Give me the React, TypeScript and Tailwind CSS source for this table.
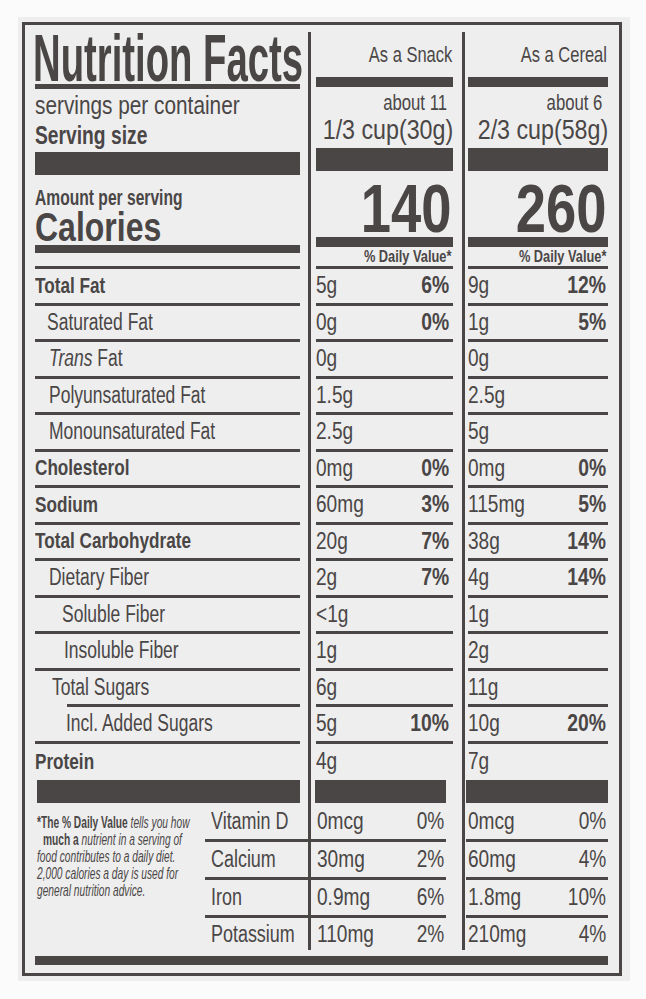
import React from "react";

type Row = {
  label: React.ReactNode;
  bold?: boolean;
  indent?: number;
  a: string;
  ap?: string;
  b: string;
  bp?: string;
  lineInset?: boolean;
  noLine?: boolean;
};

const rows: Row[] = [
  { label: "Total Fat", bold: true, a: "5g", ap: "6%", b: "9g", bp: "12%" },
  { label: "Saturated Fat", indent: 1, a: "0g", ap: "0%", b: "1g", bp: "5%" },
  { label: (<><i>Trans</i>{" "}Fat</>), indent: 2, a: "0g", b: "0g" },
  { label: "Polyunsaturated Fat", indent: 2, a: "1.5g", b: "2.5g" },
  { label: "Monounsaturated Fat", indent: 2, a: "2.5g", b: "5g" },
  { label: "Cholesterol", bold: true, a: "0mg", ap: "0%", b: "0mg", bp: "0%" },
  { label: "Sodium", bold: true, a: "60mg", ap: "3%", b: "115mg", bp: "5%" },
  { label: "Total Carbohydrate", bold: true, a: "20g", ap: "7%", b: "38g", bp: "14%" },
  { label: "Dietary Fiber", indent: 2, a: "2g", ap: "7%", b: "4g", bp: "14%" },
  { label: "Soluble Fiber", indent: 3, a: "<1g", b: "1g" },
  { label: "Insoluble Fiber", indent: 4, a: "1g", b: "2g" },
  { label: "Total Sugars", indent: 5, a: "6g", b: "11g", lineInset: true },
  { label: "Incl. Added Sugars", indent: 6, a: "5g", ap: "10%", b: "10g", bp: "20%" },
  { label: "Protein", bold: true, a: "4g", b: "7g", noLine: true },
];

function indentClass(i?: number) {
  switch (i) {
    case 1:
      return "pl-[12px]";
    case 2:
      return "pl-[14px]";
    case 3:
      return "pl-[27px]";
    case 4:
      return "pl-[29px]";
    case 5:
      return "pl-[17px]";
    case 6:
      return "pl-[31px]";
    default:
      return "pl-0";
  }
}

const vit = [
  { label: "Vitamin D", a: "0mcg", ap: "0%", b: "0mcg", bp: "0%", h: "h-[39px]" },
  { label: "Calcium", a: "30mg", ap: "2%", b: "60mg", bp: "4%", h: "h-[38px]" },
  { label: "Iron", a: "0.9mg", ap: "6%", b: "1.8mg", bp: "10%", h: "h-[38px]" },
  { label: "Potassium", a: "110mg", ap: "2%", b: "210mg", bp: "4%", h: "h-[32px]", last: true },
];

function S({ children, c }: { children: React.ReactNode; c: string }) {
  return <span className={`inline-block whitespace-nowrap ${c}`}>{children}</span>;
}

const LINE = "border-b-[3px] border-[#4a4646]";

export default function App() {
  return (
    <div className="w-[646px] h-[999px] bg-[#fbfbfb] pt-[17px] pl-[18px] text-[#4a4646] font-['Liberation_Sans',Arial,sans-serif]">
      <div className="w-[612px] h-[964px] bg-[#eeeeee] pt-[5px] pl-[4px]">
        <div className="w-[600px] h-[954px] border-[3px] border-[#4a4646] flex flex-col pt-[7px]">
          {/* Header */}
          <div className="flex h-[237px]">
            <div className="w-[283px] pl-[10px] pr-[8px] flex flex-col">
              <div className="h-[52px] text-[66px] leading-[52px] font-bold whitespace-nowrap -ml-[2px]">
                <S c="origin-left scale-x-[0.58]">Nutrition Facts</S>
              </div>
              <div className="h-[5px] bg-[#4a4646]" />
              <div className="h-[63px] flex flex-col">
                <div className="h-[32px] text-[26px] leading-[32px]">
                  <S c="origin-left scale-x-[0.8]">servings per container</S>
                </div>
                <div className="h-[31px] text-[25px] leading-[29px] font-bold">
                  <S c="origin-left scale-x-[0.77]">Serving size</S>
                </div>
              </div>
              <div className="h-[23px] bg-[#4a4646]" />
              <div className="h-[70px] pt-[11px] flex flex-col">
                <div className="h-[23px] text-[22px] leading-[23px] font-bold">
                  <S c="origin-left scale-x-[0.71]">Amount per serving</S>
                </div>
                <div className="h-[36px] text-[41px] leading-[36px] font-bold">
                  <S c="origin-left scale-x-[0.78]">Calories</S>
                </div>
              </div>
              <div className="h-[8px] bg-[#4a4646]" />
              <div className="h-[13px]" />
              <div className="h-[3px] bg-[#4a4646]" />
            </div>

            {[
              { head: "As a Snack", serv: "about 11", size: "1/3 cup(30g)", cal: "140", cls: "w-[154px] pl-[5px] pr-[9px]" },
              { head: "As a Cereal", serv: "about 6", size: "2/3 cup(58g)", cal: "260", cls: "w-[157px] pl-[3px] pr-[11px]" },
            ].map((c) => (
              <div key={c.head} className={`${c.cls} border-l-[3px] border-[#4a4646] flex flex-col`}>
                <div className="h-[45px] flex items-center justify-end text-[22px] leading-none pr-[1px]">
                  <S c="origin-right scale-x-[0.75]">{c.head}</S>
                </div>
                <div className="h-[10px] bg-[#4a4646]" />
                <div className="h-[61px] flex flex-col items-end pt-[4px]">
                  <div className="text-[22px] leading-[24px] pr-[6px]">
                    <S c="origin-right scale-x-[0.76]">{c.serv}</S>
                  </div>
                  <div className="text-[28px] leading-[30px]">
                    <S c="origin-right scale-x-[0.83]">{c.size}</S>
                  </div>
                </div>
                <div className="h-[23px] bg-[#4a4646]" />
                <div className="h-[66px] flex justify-end pt-[4px] text-[68px] leading-[66px] font-bold pr-[2px]">
                  <S c="origin-right scale-x-[0.8]">{c.cal}</S>
                </div>
                <div className="h-[10px] bg-[#4a4646]" />
                <div className="h-[19px] flex items-center justify-end text-[16px] leading-none font-bold pr-[2px]">
                  <S c="origin-right scale-x-[0.8]">% Daily Value*</S>
                </div>
                <div className="h-[3px] bg-[#4a4646]" />
              </div>
            ))}
          </div>

          {/* Nutrient rows */}
          <div className="flex flex-col h-[511px]">
            {rows.map((r, i) => (
              <div key={i} className="flex flex-1">
                <div className="w-[283px] pl-[10px] pr-[8px] flex">
                  <div className={`flex-1 flex relative ${r.noLine || r.lineInset ? "" : LINE}`}>
                    <div
                      className={`flex-1 flex items-center ${indentClass(r.indent)} ${
                        r.bold ? "text-[22px] font-bold" : "text-[23px]"
                      } leading-none ${r.lineInset ? "pb-[3px]" : ""}`}
                    >
                      <S c={r.bold ? "origin-left scale-x-[0.78]" : "origin-left scale-x-[0.76]"}>{r.label}</S>
                    </div>
                    {r.lineInset && <div className="absolute left-[32px] right-0 bottom-0 h-[3px] bg-[#4a4646]" />}
                  </div>
                </div>
                <div className="w-[154px] border-l-[3px] border-[#4a4646] pl-[5px] pr-[9px] flex">
                  <div className={`flex-1 flex items-center justify-between ${r.noLine ? "" : LINE}`}>
                    <span className="text-[23px] leading-none">
                      <S c="origin-left scale-x-[0.83]">{r.a}</S>
                    </span>
                    {r.ap && (
                      <span className="text-[23px] leading-none font-bold pr-[4px]">
                        <S c="origin-right scale-x-[0.84]">{r.ap}</S>
                      </span>
                    )}
                  </div>
                </div>
                <div className="w-[157px] border-l-[3px] border-[#4a4646] pl-[3px] pr-[11px] flex">
                  <div className={`flex-1 flex items-center justify-between ${r.noLine ? "" : LINE}`}>
                    <span className="text-[23px] leading-none">
                      <S c="origin-left scale-x-[0.83]">{r.b}</S>
                    </span>
                    {r.bp && (
                      <span className="text-[23px] leading-none font-bold pr-[2px]">
                        <S c="origin-right scale-x-[0.84]">{r.bp}</S>
                      </span>
                    )}
                  </div>
                </div>
              </div>
            ))}
          </div>

          {/* Bottom section */}
          <div className="flex h-[170px]">
            <div className="w-[283px] pl-[12px] pr-[8px] flex flex-col">
              <div className="h-[23px] bg-[#4a4646]" />
              <div className="flex flex-1">
                <div className="w-[168px] pt-[11px] text-[17px] leading-[17px] whitespace-nowrap">
                  <div className="origin-top-left scale-x-[0.6]">
                    <div>
                      <span className="font-bold">*The % Daily Value</span> <i>tells you how</i>
                    </div>
                    <div className="pl-[10px]">
                      <span className="font-bold">much a</span> <i>nutrient in a serving of</i>
                    </div>
                    <div>
                      <i>food contributes to a daily diet.</i>
                    </div>
                    <div>
                      <i>2,000 calories a day is used for</i>
                    </div>
                    <div>
                      <i>general nutrition advice.</i>
                    </div>
                  </div>
                </div>
                <div className="flex-1 flex flex-col">
                  {vit.map((v) => (
                    <div key={v.label} className={`${v.h} flex`}>
                      <div
                        className={`flex-1 flex items-center pl-[6px] text-[23px] leading-none ${v.last ? "" : LINE}`}
                      >
                        <S c="origin-left scale-x-[0.78]">{v.label}</S>
                      </div>
                    </div>
                  ))}
                </div>
              </div>
            </div>
            {[
              { key: "a", cls: "w-[154px] pl-[4px] pr-[16px]" },
              { key: "b", cls: "w-[157px] pl-[1px] pr-[11px]" },
            ].map((c) => (
              <div key={c.key} className={`${c.cls} border-l-[3px] border-[#4a4646] flex flex-col`}>
                <div className="h-[23px] bg-[#4a4646]" />
                {vit.map((v) => (
                  <div key={v.label} className={`${v.h} flex`}>
                    <div
                      className={`flex-1 flex items-center justify-between text-[23px] leading-none ${v.last ? "" : LINE}`}
                    >
                      <span className="pl-[2px]">
                        <S c="origin-left scale-x-[0.83]">{c.key === "a" ? v.a : v.b}</S>
                      </span>
                      <span className="pr-[2px]">
                        <S c="origin-right scale-x-[0.83]">{c.key === "a" ? v.ap : v.bp}</S>
                      </span>
                    </div>
                  </div>
                ))}
              </div>
            ))}
          </div>

          <div className="mt-[6px] h-[9px] ml-[10px] mr-[11px] bg-[#4a4646]" />
        </div>
      </div>
    </div>
  );
}
